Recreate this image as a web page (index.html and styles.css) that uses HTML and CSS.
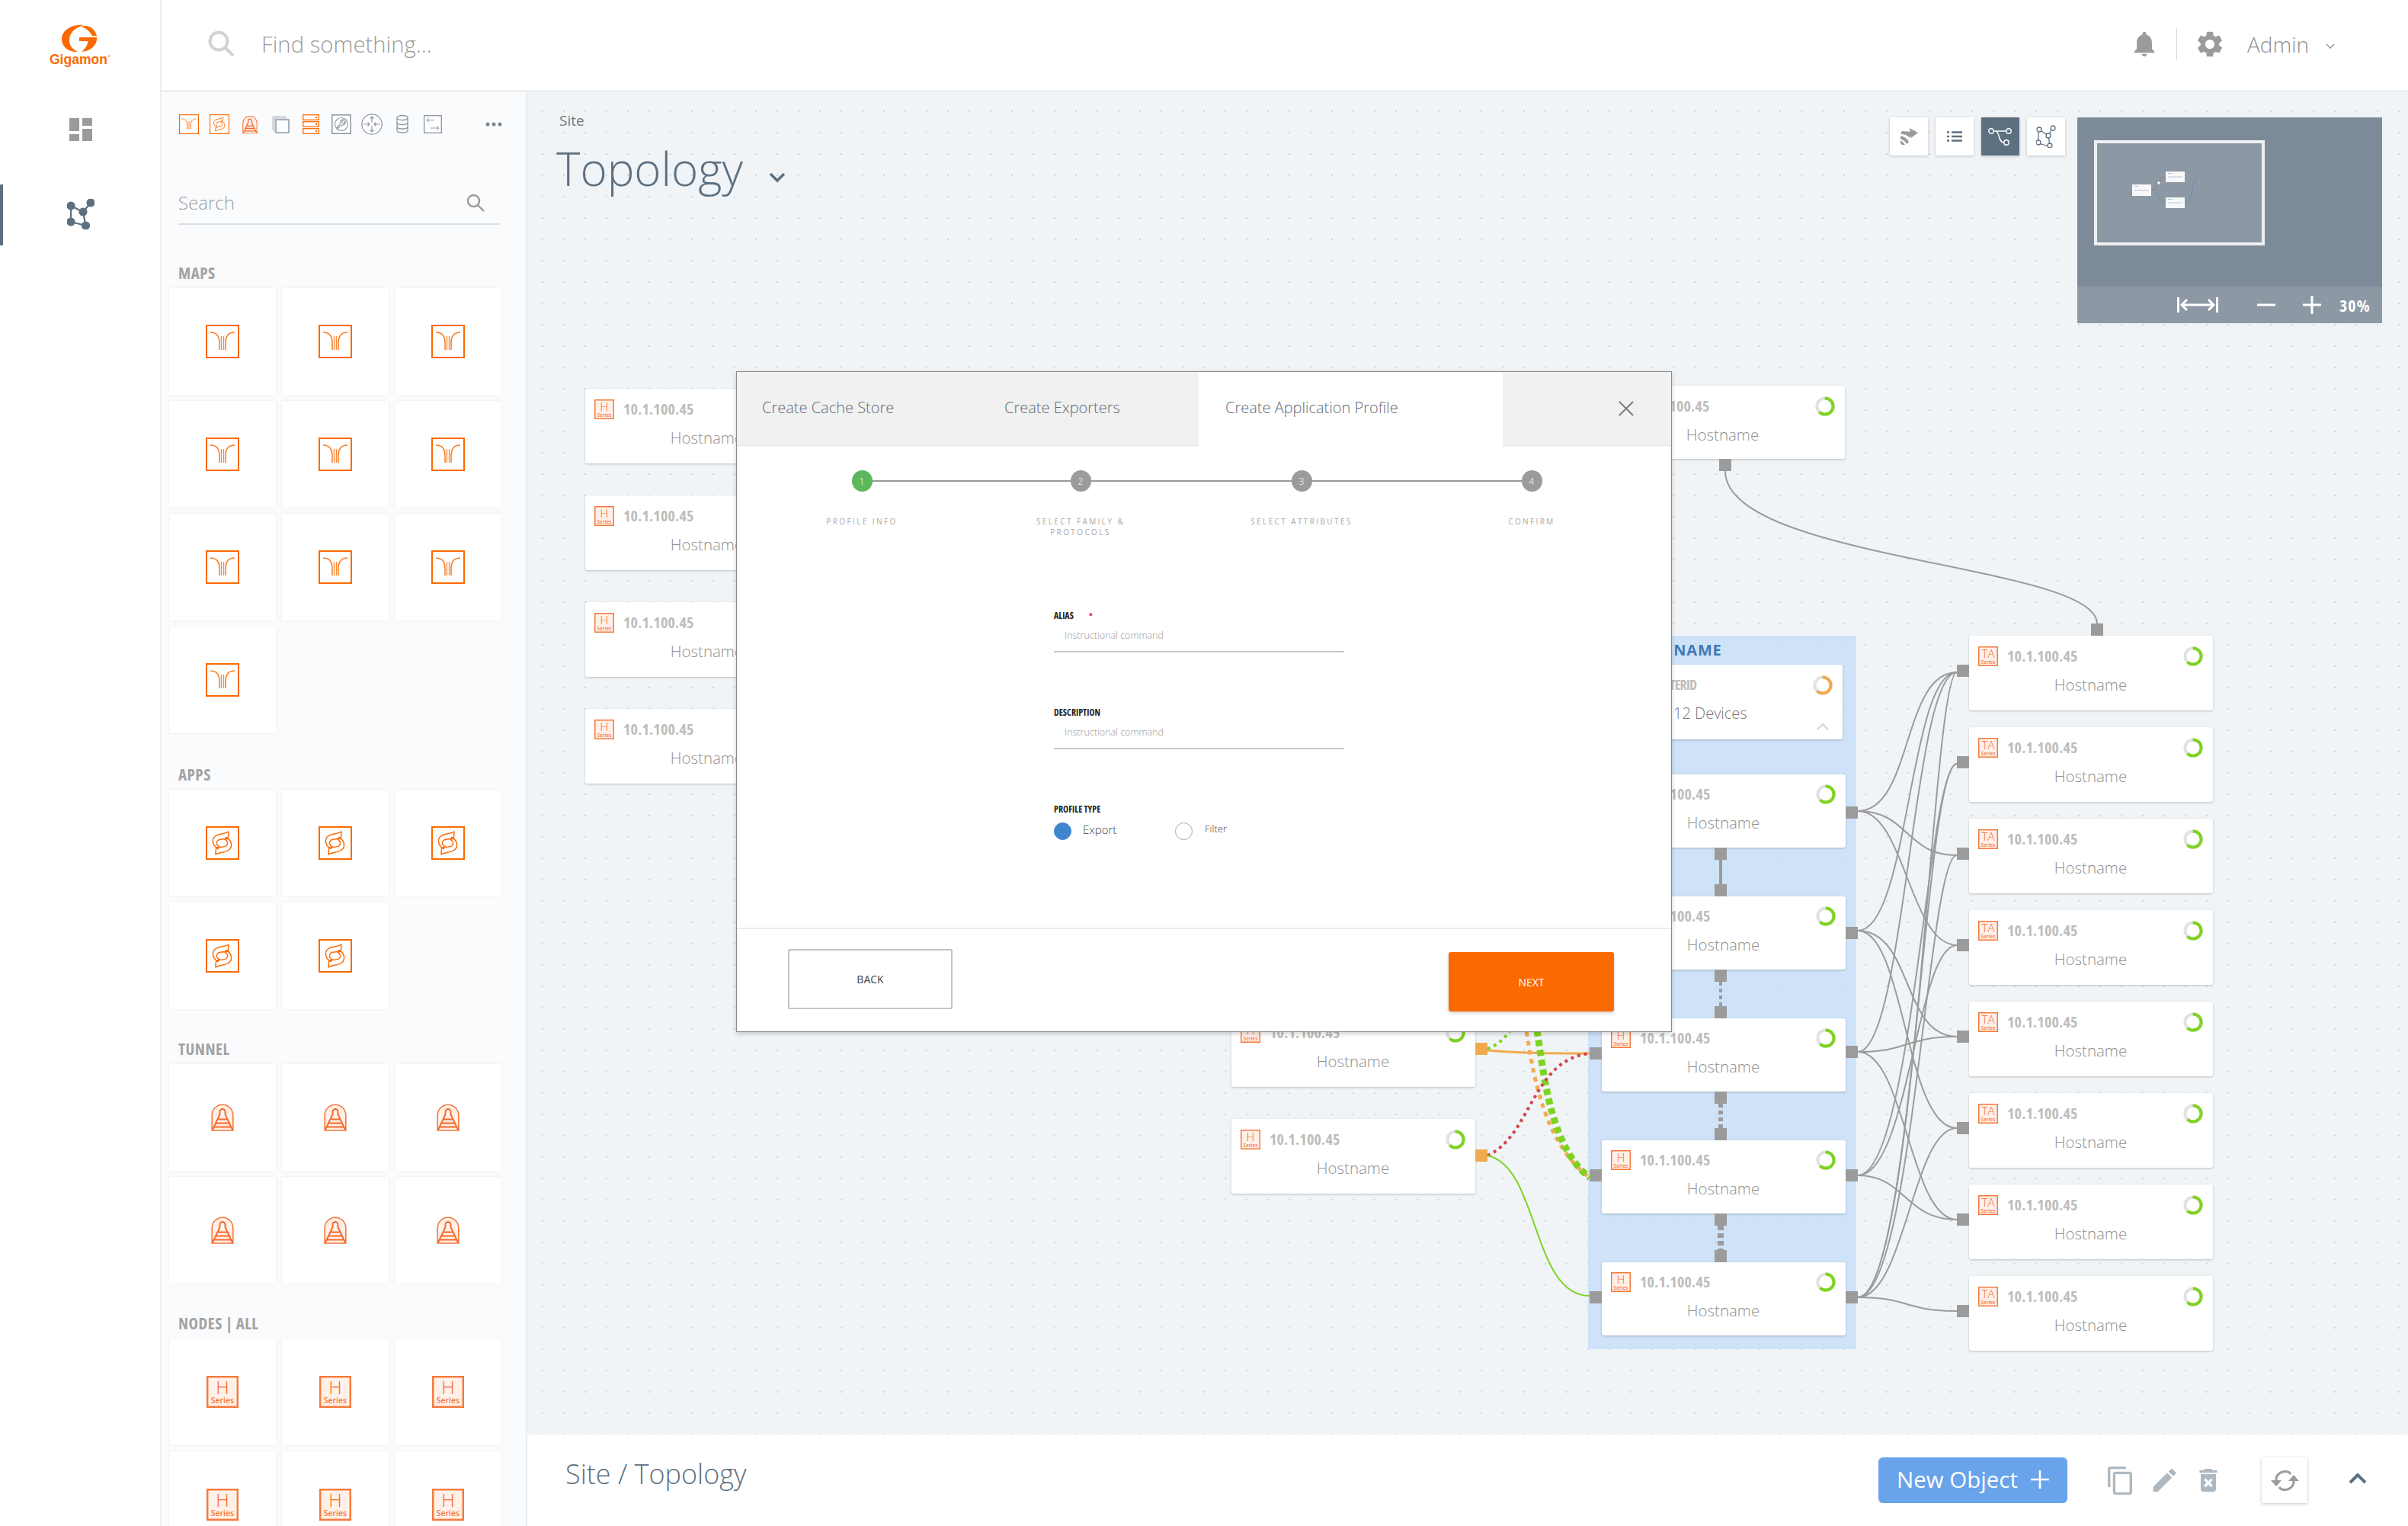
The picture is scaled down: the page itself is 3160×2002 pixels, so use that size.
FILE: index.html
```html
<!DOCTYPE html>
<html lang="en">
<head>
<meta charset="utf-8">
<title>Topology</title>
<link rel="stylesheet" href="styles.css">
</head>
<body>
<svg class="defs" width="0" height="0">
  <symbol id="i-map" viewBox="0 0 44 44"><rect x="1" y="1" width="42" height="42" fill="#fff" stroke="#fb6a00" stroke-width="2"/><path d="M6 10C13 10 18 14 18 24V33M38 10C31 10 26 14 26 24V33" fill="none" stroke="#fb7a1e" stroke-width="1.500"/><path d="M20.500 33V15M23.500 33V15" fill="none" stroke="#fb8a3c" stroke-width="1.300"/></symbol>
  <symbol id="i-app" viewBox="0 0 44 44"><rect x="1" y="1" width="42" height="42" fill="#fff" stroke="#fb6a00" stroke-width="2"/><g fill="none" stroke="#fb6a00" stroke-width="1.500" stroke-linejoin="round"><path d="M30 7C26 10 17 9.500 12.500 13C7.500 17 8.500 25 16 29.500L18 27C14 24.500 13 21 16 18.500C20 15.500 27 18 29 15.500C30 13 30 10 30 7Z"/><path d="M13 37C17 34 26 34.500 30.500 31C35.500 27 34.500 19 27 14.500L25 17C29 19.500 30 23 27 25.500C23 28.500 16 26 14 28.500C13 31 13 34 13 37Z"/></g></symbol>
  <symbol id="i-tun" viewBox="0 0 30 36"><path d="M1.200 35V15A13.800 13.800 0 0 1 28.800 15V35Z" fill="#fff0e8" stroke="#f5793a" stroke-width="1.600"/><path d="M1.500 35L11.500 14V10.500A3.500 3.500 0 0 1 18.500 10.500V14L28.500 35M8.500 20.500H21.500M6 25.500H24M3.500 30.500H26.500" fill="none" stroke="#f5682a" stroke-width="1.900"/></symbol>
  <symbol id="i-h" viewBox="0 0 26 26"><rect x=".75" y=".75" width="24.500" height="24.500" fill="#fff0e8" stroke="#f5793a" stroke-width="1.500"/><text x="13" y="15" class="ic-big" text-anchor="middle">H</text><text x="13" y="22.500" class="ic-small" text-anchor="middle">Series</text></symbol>
  <symbol id="i-ta" viewBox="0 0 26 26"><rect x=".75" y=".75" width="24.500" height="24.500" fill="#fff0e8" stroke="#f5793a" stroke-width="1.500"/><text x="13" y="15" class="ic-big" text-anchor="middle">TA</text><text x="13" y="22.500" class="ic-small" text-anchor="middle">Series</text></symbol>
  <symbol id="ring-g" viewBox="0 0 26 26"><circle cx="13" cy="13" r="10.600" fill="none" stroke="#e2e2e2" stroke-width="4"/><circle cx="13" cy="13" r="10.600" fill="none" stroke="#7ed321" stroke-width="4" pathLength="100" stroke-dasharray="63 100" transform="rotate(-92 13 13)"/></symbol>
  <symbol id="ring-o" viewBox="0 0 26 26"><circle cx="13" cy="13" r="10.600" fill="none" stroke="#e2e2e2" stroke-width="4"/><circle cx="13" cy="13" r="10.600" fill="none" stroke="#efab4e" stroke-width="4" pathLength="100" stroke-dasharray="63 100" transform="rotate(-92 13 13)"/></symbol>
</svg>

<div class="app">
  <nav class="nav">
    <svg class="logo" viewBox="64 30 86 58" width="86" height="58">
      <path d="M111 33C95 31 82 40 82 51C82 62 92 69 103 68C94 64 90 56 93 47C96 39 104 35 111 33Z" fill="#fb6a00"/>
      <path d="M107 35C116 32 125 36 128 47L122 47C119 41 114 37 107 35ZM105 49H128.500C128 60 120 67 108 68C114 63 116 58 116.500 54H105Z" fill="#fb6a00"/>
      <text x="66" y="84" class="logo-text">Gigamon</text>
      <circle cx="144.500" cy="73.500" r="1.300" fill="none" stroke="#fb8a3c" stroke-width=".7"/>
    </svg>
    <svg class="nav-dash" viewBox="0 0 30 30" width="30" height="30"><path d="M0 0H13V17H0ZM17 0H30V10H17ZM17 14H30V30H17ZM0 21H13V30H0Z" fill="#9b9b9b"/></svg>
    <div class="nav-item">
      <svg viewBox="0 0 36 40" width="36" height="40"><g stroke="#5d7080" stroke-width="2.200" fill="#5d7080"><path d="M5 9L21 17M31 5L21 17M5 9V30M5 30L24.500 35M21 17L24.500 35" fill="none"/><circle cx="5" cy="9" r="4.500"/><circle cx="31" cy="5" r="4.500"/><circle cx="21" cy="17" r="4.500"/><circle cx="5" cy="30" r="4.500"/><circle cx="24.500" cy="35" r="4.500"/></g></svg>
    </div>
  </nav>
  <div class="main">
    <header class="topbar">
      <svg class="top-search" viewBox="0 0 35 35" width="35" height="35"><circle cx="14" cy="14" r="11.500" fill="none" stroke="#d2d2d2" stroke-width="4"/><path d="M22 22L33 33" stroke="#d2d2d2" stroke-width="4"/></svg>
      <span class="find">Find something...</span>
      <svg class="bell" viewBox="4 2 16 20.500" width="28" height="34"><path fill="#9b9b9b" d="M12 22c1.100 0 2-.9 2-2h-4c0 1.100.89 2 2 2zm6-6v-5c0-3.070-1.640-5.640-4.500-6.320V4c0-.83-.67-1.500-1.500-1.500s-1.500.67-1.500 1.500v.68C7.630 5.360 6 7.920 6 11v5l-2 2v1h16v-1l-2-2z"/></svg>
      <span class="top-div"></span>
      <svg class="gear" viewBox="2.500 2 19 20" width="34" height="34"><path fill="#9b9b9b" d="M19.140 12.940c.04-.3.06-.61.06-.94 0-.32-.02-.64-.07-.94l2.030-1.580c.18-.14.23-.41.12-.61l-1.920-3.320c-.12-.22-.37-.29-.59-.22l-2.390.96c-.5-.38-1.030-.7-1.620-.94l-.36-2.540c-.04-.24-.24-.41-.48-.41h-3.840c-.24 0-.43.17-.47.41l-.36 2.540c-.59.24-1.130.57-1.620.94l-2.390-.96c-.22-.08-.47 0-.59.22L2.740 8.870c-.12.21-.08.47.12.61l2.030 1.580c-.05.3-.09.63-.09.94s.02.64.07.94l-2.030 1.580c-.18.14-.23.41-.12.61l1.920 3.320c.12.22.37.29.59.22l2.390-.96c.5.38 1.030.7 1.620.94l.36 2.540c.05.24.24.41.48.41h3.840c.24 0 .44-.17.47-.41l.36-2.540c.59-.24 1.130-.56 1.620-.94l2.390.96c.22.08.47 0 .59-.22l1.920-3.320c.12-.22.07-.47-.12-.61l-2.010-1.580zM12 15.600c-1.980 0-3.600-1.620-3.600-3.600s1.620-3.600 3.600-3.600 3.600 1.620 3.600 3.600-1.620 3.600-3.600 3.600z"/></svg>
      <span class="admin">Admin</span>
      <svg class="admin-chev" viewBox="0 0 12 7" width="12" height="7"><path d="M1 1L6 6L11 1" fill="none" stroke="#9b9b9b" stroke-width="1.500"/></svg>
    </header>
    <div class="work">
      <aside class="side">
        <div class="side-tabs">
          <svg class="t26" viewBox="0 0 44 44"><use href="#i-map"/></svg>
          <svg class="t26" viewBox="0 0 44 44"><use href="#i-app"/></svg>
          <svg class="t-tun" viewBox="0 0 30 36"><use href="#i-tun"/></svg>
          <svg class="t22" viewBox="0 0 23 23"><path d="M1 19V1H18M3 21V3H20" fill="none" stroke="#aeb4bb" stroke-width="1"/><rect x="5" y="5" width="17" height="17" fill="#fbfcfd" stroke="#8d96a1" stroke-width="1.500"/></svg>
          <svg class="t-srv" viewBox="0 0 22 26"><g fill="#fff" stroke="#fb6a00" stroke-width="1.300"><rect x=".7" y=".7" width="20.600" height="6.600"/><rect x=".7" y="9.700" width="20.600" height="6.600"/><rect x=".7" y="18.700" width="20.600" height="6.600"/></g><g fill="#fb7a1e"><circle cx="18" cy="4" r="1.300"/><circle cx="18" cy="13" r="1.300"/><circle cx="18" cy="22" r="1.300"/></g></svg>
          <svg class="t26" viewBox="0 0 26 26"><rect x=".8" y=".8" width="24.400" height="24.400" fill="#fff" stroke="#8d96a1" stroke-width="1.500"/><circle cx="13" cy="13" r="8.500" fill="none" stroke="#8d96a1" stroke-width="1.100"/><path d="M18 8.500a4 4 0 0 1-5 5.500l-4.500 4.500-1.500-1.500 4.500-4.500a4 4 0 0 1 4.500-5.500l-2.500 2.500.8 2 2 .6z" fill="none" stroke="#8d96a1" stroke-width="1.100"/></svg>
          <svg class="t28" viewBox="0 0 28 28"><circle cx="14" cy="14" r="13.200" fill="#fff" stroke="#8d96a1" stroke-width="1.200"/><path d="M14 11.500V4M11.500 6.500L14 4L16.500 6.500M14 16.500V24M11.500 21.500L14 24L16.500 21.500M3 14H11M8.500 11.500L11 14L8.500 16.500M25 14H17M19.500 11.500L17 14L19.500 16.500" fill="none" stroke="#8d96a1" stroke-width="1.200"/></svg>
          <svg class="t-db" viewBox="0 0 16 26"><path d="M1 4.500V21C1 25 15 25 15 21V4.500M1 4.500C1 .5 15 .5 15 4.500C15 8.500 1 8.500 1 4.500ZM1 10.500C1 14.500 15 14.500 15 10.500M1 16C1 20 15 20 15 16" fill="none" stroke="#8d96a1" stroke-width="1.300"/></svg>
          <svg class="t-arr" viewBox="0 0 24 24"><rect x=".7" y=".7" width="22.600" height="22.600" fill="#fff" stroke="#8d96a1" stroke-width="1.300"/><path d="M14 6.500H4M7 3.500L4 6.500L7 9.500M9 17H20M17 14L20 17L17 20" fill="none" stroke="#8d96a1" stroke-width="1"/></svg>
          <svg class="t-dots" viewBox="0 0 22 6"><g fill="#7c8693"><circle cx="3" cy="3" r="2.500"/><circle cx="11" cy="3" r="2.500"/><circle cx="19" cy="3" r="2.500"/></g></svg>
        </div>
        <div class="side-search">
          <span>Search</span>
          <svg viewBox="0 0 24 24" width="24" height="24"><circle cx="9.500" cy="9.500" r="7.500" fill="none" stroke="#9b9b9b" stroke-width="2.400"/><path d="M15 15L23 23" stroke="#9b9b9b" stroke-width="2.400"/></svg>
        </div>
        <h4 class="side-label">MAPS</h4>
        <div class="cards">
          <div class="card"><svg class="ic44"><use href="#i-map"/></svg></div>
          <div class="card"><svg class="ic44"><use href="#i-map"/></svg></div>
          <div class="card"><svg class="ic44"><use href="#i-map"/></svg></div>
          <div class="card"><svg class="ic44"><use href="#i-map"/></svg></div>
          <div class="card"><svg class="ic44"><use href="#i-map"/></svg></div>
          <div class="card"><svg class="ic44"><use href="#i-map"/></svg></div>
          <div class="card"><svg class="ic44"><use href="#i-map"/></svg></div>
          <div class="card"><svg class="ic44"><use href="#i-map"/></svg></div>
          <div class="card"><svg class="ic44"><use href="#i-map"/></svg></div>
          <div class="card"><svg class="ic44"><use href="#i-map"/></svg></div>
        </div>
        <h4 class="side-label label-apps">APPS</h4>
        <div class="cards">
          <div class="card"><svg class="ic44"><use href="#i-app"/></svg></div>
          <div class="card"><svg class="ic44"><use href="#i-app"/></svg></div>
          <div class="card"><svg class="ic44"><use href="#i-app"/></svg></div>
          <div class="card"><svg class="ic44"><use href="#i-app"/></svg></div>
          <div class="card"><svg class="ic44"><use href="#i-app"/></svg></div>
        </div>
        <h4 class="side-label">TUNNEL</h4>
        <div class="cards">
          <div class="card"><svg class="ic-tun"><use href="#i-tun"/></svg></div>
          <div class="card"><svg class="ic-tun"><use href="#i-tun"/></svg></div>
          <div class="card"><svg class="ic-tun"><use href="#i-tun"/></svg></div>
          <div class="card"><svg class="ic-tun"><use href="#i-tun"/></svg></div>
          <div class="card"><svg class="ic-tun"><use href="#i-tun"/></svg></div>
          <div class="card"><svg class="ic-tun"><use href="#i-tun"/></svg></div>
        </div>
        <h4 class="side-label">NODES | ALL</h4>
        <div class="cards">
          <div class="card"><svg class="ic42"><use href="#i-h"/></svg></div>
          <div class="card"><svg class="ic42"><use href="#i-h"/></svg></div>
          <div class="card"><svg class="ic42"><use href="#i-h"/></svg></div>
          <div class="card"><svg class="ic42"><use href="#i-h"/></svg></div>
          <div class="card"><svg class="ic42"><use href="#i-h"/></svg></div>
          <div class="card"><svg class="ic42"><use href="#i-h"/></svg></div>
        </div>
      </aside>
      <div class="stage">
        <section class="canvas">
          <div class="crumb">Site</div>
          <div class="title-row">
            <h1>Topology</h1>
            <svg viewBox="0 0 22 14" width="22" height="14"><path d="M2 2L11 11L20 2" fill="none" stroke="#5d7080" stroke-width="3.500"/></svg>
          </div>

          <div class="tools">
            <button class="tool"><svg viewBox="0 0 23 22" width="23" height="22"><path d="M12 0L23 6L14 13Z" fill="#9b9b9b"/><path d="M15 5L2 4L0 8C6 8 10 10 12 13L15 9ZM0 10.500C5 11 9 14 11 18L8 21C6 17 3 15 0 14.500ZM0 16.500C2 17 4 19 6 22L2 22L0 20Z" fill="#9b9b9b"/></svg></button>
            <button class="tool"><svg viewBox="0 0 20 14" width="20" height="14"><path d="M6 1.500H20M6 7H20M6 12.500H20M0 1.500H3M0 7H3M0 12.500H3" stroke="#5d7080" stroke-width="2.600"/></svg></button>
            <button class="tool tool-on"><svg viewBox="0 0 32 24" width="32" height="24"><g fill="none" stroke="#fff" stroke-width="1.400"><circle cx="4" cy="5" r="3.200"/><circle cx="27" cy="5" r="3.200"/><circle cx="24" cy="20" r="3.200"/><path d="M7.200 5H23.800M10 5C15 5 13 20 20.800 20"/></g></svg></button>
            <button class="tool"><svg viewBox="0 0 26 30" width="26" height="30"><g fill="#fff" stroke="#5d7080" stroke-width="1.300"><path d="M4 6L16 14M22 3L16 14M3 7V23M3 24L17 28M16 14L18 27" fill="none"/><circle cx="4" cy="6" r="3"/><circle cx="22" cy="4" r="3"/><circle cx="16" cy="14" r="3"/><circle cx="3" cy="23" r="3"/><circle cx="18" cy="27" r="3"/></g></svg></button>
            <div class="minimap">
              <div class="mini-view">
                <svg viewBox="2752 188 216 130" width="216" height="130"><path d="M2823 249C2835 249 2830 232 2842 232" fill="none" stroke="#a87a6a" stroke-width="1"/><path d="M2823 249C2835 249 2830 266 2842 266M2867 266C2880 266 2875 232 2884 232" fill="none" stroke="#6a8eb0" stroke-width="1"/><circle cx="2833" cy="240" r="2.200" fill="#fff" stroke="#a87a6a" stroke-width=".7"/><g fill="#f7f8f9"><rect x="2798" y="242" width="25" height="15"/><rect x="2842" y="225" width="25" height="14"/><rect x="2842" y="259" width="25" height="14"/></g><path d="M2801 244.500H2806M2801 249.500H2820M2845 227.500H2851M2845 232H2864M2845 261.500H2851M2845 266H2864" stroke="#b7c6d3" stroke-width="1"/></svg>
              </div>
              <div class="mini-foot">
                <svg class="fit" viewBox="0 0 54 20" width="54" height="20"><path d="M1.500 0V20M52.500 0V20M6 10H48M13 3L6 10L13 17M41 3L48 10L41 17" fill="none" stroke="#fff" stroke-width="3"/></svg>
                <svg class="m-minus" viewBox="0 0 24 4" width="24" height="4"><path d="M0 2H24" stroke="#fff" stroke-width="3"/></svg>
                <svg class="m-plus" viewBox="0 0 24 24" width="24" height="24"><path d="M0 12H24M12 0V24" stroke="#fff" stroke-width="3"/></svg>
                <span>30%</span>
              </div>
            </div>
          </div>

          <div class="col col-left">
            <div class="node"><div class="nh"><svg class="badge"><use href="#i-h"/></svg><span class="ip">10.1.100.45</span><svg class="ring"><use href="#ring-g"/></svg></div><div class="host">Hostname</div></div>
            <div class="node"><div class="nh"><svg class="badge"><use href="#i-h"/></svg><span class="ip">10.1.100.45</span><svg class="ring"><use href="#ring-g"/></svg></div><div class="host">Hostname</div></div>
            <div class="node"><div class="nh"><svg class="badge"><use href="#i-h"/></svg><span class="ip">10.1.100.45</span><svg class="ring"><use href="#ring-g"/></svg></div><div class="host">Hostname</div></div>
            <div class="node"><div class="nh"><svg class="badge"><use href="#i-h"/></svg><span class="ip">10.1.100.45</span><svg class="ring"><use href="#ring-g"/></svg></div><div class="host">Hostname</div></div>
          </div>

          <div class="col col-low">
            <div class="node"><div class="nh"><svg class="badge"><use href="#i-h"/></svg><span class="ip">10.1.100.45</span><svg class="ring"><use href="#ring-g"/></svg></div><div class="host">Hostname</div><i class="port pr orange"></i></div>
            <div class="node"><div class="nh"><svg class="badge"><use href="#i-h"/></svg><span class="ip">10.1.100.45</span><svg class="ring"><use href="#ring-g"/></svg></div><div class="host">Hostname</div><i class="port pr orange"></i></div>
          </div>

          <div class="node node-top"><div class="nh"><svg class="badge"><use href="#i-h"/></svg><span class="ip">10.1.100.45</span><svg class="ring"><use href="#ring-g"/></svg></div><div class="host">Hostname</div><i class="port pb pb-tail"></i></div>

          <div class="group">
            <div class="group-title">GROUP NAME</div>
            <div class="node cluster">
              <div class="nh"><svg class="badge"><use href="#i-h"/></svg><span class="ip">CLUSTERID</span><svg class="ring"><use href="#ring-o"/></svg></div>
              <div class="devices">12 Devices</div>
              <svg class="cl-chev" viewBox="0 0 16 10" width="16" height="10"><path d="M1 9L8 2L15 9" fill="none" stroke="#d5d5d5" stroke-width="2.200"/></svg>
            </div>
            <div class="node gnode"><div class="nh"><svg class="badge"><use href="#i-h"/></svg><span class="ip">10.1.100.45</span><svg class="ring"><use href="#ring-g"/></svg></div><div class="host">Hostname</div><i class="port pr p42"></i><i class="port pb"></i></div>
            <div class="node gnode"><div class="nh"><svg class="badge"><use href="#i-h"/></svg><span class="ip">10.1.100.45</span><svg class="ring"><use href="#ring-g"/></svg></div><div class="host">Hostname</div><i class="port pr p40"></i><i class="port pt"></i><i class="port pb"></i></div>
            <div class="node gnode"><div class="nh"><svg class="badge"><use href="#i-h"/></svg><span class="ip">10.1.100.45</span><svg class="ring"><use href="#ring-g"/></svg></div><div class="host">Hostname</div><i class="port pl"></i><i class="port pr p36"></i><i class="port pt"></i><i class="port pb"></i></div>
            <div class="node gnode"><div class="nh"><svg class="badge"><use href="#i-h"/></svg><span class="ip">10.1.100.45</span><svg class="ring"><use href="#ring-g"/></svg></div><div class="host">Hostname</div><i class="port pl"></i><i class="port pr"></i><i class="port pt"></i><i class="port pb"></i></div>
            <div class="node gnode"><div class="nh"><svg class="badge"><use href="#i-h"/></svg><span class="ip">10.1.100.45</span><svg class="ring"><use href="#ring-g"/></svg></div><div class="host">Hostname</div><i class="port pl"></i><i class="port pr"></i><i class="port pt"></i></div>
          </div>

          <div class="col col-ta">
            <div class="node"><div class="nh"><svg class="badge"><use href="#i-ta"/></svg><span class="ip">10.1.100.45</span><svg class="ring"><use href="#ring-g"/></svg></div><div class="host">Hostname</div><i class="port pl"></i><i class="port pb-top"></i></div>
            <div class="node"><div class="nh"><svg class="badge"><use href="#i-ta"/></svg><span class="ip">10.1.100.45</span><svg class="ring"><use href="#ring-g"/></svg></div><div class="host">Hostname</div><i class="port pl"></i></div>
            <div class="node"><div class="nh"><svg class="badge"><use href="#i-ta"/></svg><span class="ip">10.1.100.45</span><svg class="ring"><use href="#ring-g"/></svg></div><div class="host">Hostname</div><i class="port pl"></i></div>
            <div class="node"><div class="nh"><svg class="badge"><use href="#i-ta"/></svg><span class="ip">10.1.100.45</span><svg class="ring"><use href="#ring-g"/></svg></div><div class="host">Hostname</div><i class="port pl"></i></div>
            <div class="node"><div class="nh"><svg class="badge"><use href="#i-ta"/></svg><span class="ip">10.1.100.45</span><svg class="ring"><use href="#ring-g"/></svg></div><div class="host">Hostname</div><i class="port pl"></i></div>
            <div class="node"><div class="nh"><svg class="badge"><use href="#i-ta"/></svg><span class="ip">10.1.100.45</span><svg class="ring"><use href="#ring-g"/></svg></div><div class="host">Hostname</div><i class="port pl"></i></div>
            <div class="node"><div class="nh"><svg class="badge"><use href="#i-ta"/></svg><span class="ip">10.1.100.45</span><svg class="ring"><use href="#ring-g"/></svg></div><div class="host">Hostname</div><i class="port pl"></i></div>
            <div class="node"><div class="nh"><svg class="badge"><use href="#i-ta"/></svg><span class="ip">10.1.100.45</span><svg class="ring"><use href="#ring-g"/></svg></div><div class="host">Hostname</div><i class="port pl"></i></div>
          </div>

          <svg class="links" viewBox="692 121 2468 1761" width="2468" height="1761">
            <g fill="none" stroke="#9b9b9b" stroke-width="2">
              <path d="M2264 618C2264 735 2752 740 2752 818"/>
              <path d="M2438 1064C2510 1064 2496 882 2568 882"/>
              <path d="M2438 1064C2505 1064 2500 1122 2568 1122"/>
              <path d="M2438 1064C2500 1064 2506 1240 2568 1240"/>
              <path d="M2438 1221C2505 1221 2505 882 2568 882"/>
              <path d="M2438 1221C2510 1221 2496 1360 2568 1360"/>
              <path d="M2438 1221C2500 1221 2500 1480 2568 1480"/>
              <path d="M2438 1380C2500 1380 2510 882 2568 882"/>
              <path d="M2438 1380C2505 1380 2500 1360 2568 1360"/>
              <path d="M2438 1380C2500 1380 2506 1600 2568 1600"/>
              <path d="M2438 1542C2510 1542 2530 1002 2568 1002"/>
              <path d="M2438 1542C2505 1542 2515 1240 2568 1240"/>
              <path d="M2438 1542C2500 1542 2500 1600 2568 1600"/>
              <path d="M2438 1702C2515 1702 2535 882 2568 882"/>
              <path d="M2438 1702C2510 1702 2525 1002 2568 1002"/>
              <path d="M2438 1702C2510 1702 2530 1122 2568 1122"/>
              <path d="M2438 1702C2500 1702 2510 1480 2568 1480"/>
              <path d="M2438 1702C2505 1702 2500 1720 2568 1720"/>
            </g>
            <path d="M2258 1128V1160" stroke="#9b9b9b" stroke-width="4"/>
            <path d="M2258 1288V1320" stroke="#9b9b9b" stroke-width="4" stroke-dasharray="5 4"/>
            <path d="M2258 1448V1480" stroke="#9b9b9b" stroke-width="6" stroke-dasharray="5 4"/>
            <path d="M2258 1608V1640" stroke="#9b9b9b" stroke-width="8" stroke-dasharray="6 4"/>
            <g fill="none">
              <path d="M1952 1378C2000 1382 2040 1382 2086 1382" stroke="#efab4e" stroke-width="3"/>
              <path d="M1952 1376C1975 1368 1988 1345 2000 1320" stroke="#7ed321" stroke-width="4" stroke-dasharray="4 5"/>
              <path d="M2000 1330C2012 1420 2028 1500 2086 1545" stroke="#efab4e" stroke-width="5" stroke-dasharray="6 6"/>
              <path d="M2010 1300C2025 1400 2030 1500 2086 1545" stroke="#7ed321" stroke-width="9" stroke-dasharray="8 5"/>
              <path d="M1952 1516C2010 1490 2010 1390 2086 1382" stroke="#d0454c" stroke-width="4" stroke-dasharray="4 5"/>
              <path d="M1952 1516C2020 1530 2010 1700 2086 1700" stroke="#7ed321" stroke-width="2"/>
            </g>
          </svg>

          <div class="modal">
            <div class="m-tabs">
              <div class="m-tab mt1">Create Cache Store</div>
              <div class="m-tab mt2">Create Exporters</div>
              <div class="m-tab mt3">Create Application Profile</div>
              <svg class="m-close" viewBox="0 0 20 20" width="20" height="20"><path d="M1 1L19 19M19 1L1 19" stroke="#777" stroke-width="1.800"/></svg>
            </div>
            <div class="steps">
              <div class="step"><b class="dot dot-on">1</b><span>PROFILE INFO</span></div>
              <div class="step"><b class="dot">2</b><span>SELECT FAMILY &amp; PROTOCOLS</span></div>
              <div class="step"><b class="dot">3</b><span>SELECT ATTRIBUTES</span></div>
              <div class="step"><b class="dot">4</b><span>CONFIRM</span></div>
            </div>
            <div class="form">
              <div class="field">
                <label>ALIAS<em>*</em></label>
                <div class="ph">Instructional command</div>
              </div>
              <div class="field">
                <label>DESCRIPTION</label>
                <div class="ph">Instructional command</div>
              </div>
              <div class="field-radio">
                <label>PROFILE TYPE</label>
                <div class="radios">
                  <i class="radio radio-on"></i><span class="r-export">Export</span>
                  <i class="radio"></i><span class="r-filter">Filter</span>
                </div>
              </div>
            </div>
            <div class="m-foot">
              <button class="btn-back">BACK</button>
              <button class="btn-next">NEXT</button>
            </div>
          </div>
        </section>
        <footer class="bottom">
          <span class="path">Site / Topology</span>
          <button class="new-obj">New Object<svg viewBox="0 0 24 24" width="24" height="24"><path d="M0 12H24M12 0V24" stroke="#fff" stroke-width="2.600"/></svg></button>
          <svg class="b-copy" viewBox="2 1 19 22" width="32" height="37"><path fill="#aeb8c1" d="M16 1H4c-1.100 0-2 .9-2 2v14h2V3h12V1zm3 4H8c-1.100 0-2 .9-2 2v14c0 1.100.9 2 2 2h11c1.100 0 2-.9 2-2V7c0-1.100-.9-2-2-2zm0 16H8V7h11v14z"/></svg>
          <svg class="b-edit" viewBox="3 3 18 18" width="31" height="30"><path fill="#aeb8c1" d="M3 17.250V21h3.750L17.810 9.940l-3.750-3.750L3 17.250zM20.710 7.040c.39-.39.39-1.020 0-1.410l-2.340-2.340c-.39-.39-1.020-.39-1.410 0l-1.830 1.830 3.750 3.750 1.830-1.830z"/></svg>
          <svg class="b-trash" viewBox="5 3 14 18" width="24" height="30"><path fill="#aeb8c1" d="M6 19c0 1.100.9 2 2 2h8c1.100 0 2-.9 2-2V7H6v12zm2.460-7.120l1.410-1.410L12 12.590l2.120-2.120 1.410 1.410L13.410 14l2.120 2.120-1.410 1.410L12 15.410l-2.120 2.120-1.410-1.410L10.590 14l-2.130-2.120zM15.500 4l-1-1h-5l-1 1H5v2h14V4z"/></svg>
          <div class="b-sync"><svg viewBox="0 0 37 27" width="37" height="27"><path d="M7 15V12C7 5 14 1 20 1.500C23 1.800 25 3 26 5M30 12V15C30 22 23 26 17 25.500C14 25.200 12 24 11 22" fill="none" stroke="#9b9b9b" stroke-width="3"/><path d="M0 13H14L7 21ZM23 14H37L30 6Z" fill="#9b9b9b"/></svg></div>
          <svg class="b-up" viewBox="0 0 24 15" width="24" height="15"><path d="M2 13L12 3L22 13" fill="none" stroke="#5d7080" stroke-width="4"/></svg>
        </footer>
      </div>
    </div>
  </div>
</div>
</body>
</html>
```
FILE: styles.css
```css
* { box-sizing: border-box; }
html, body { margin: 0; padding: 0; }
body { width: 3160px; height: 2002px; overflow: hidden; font-family: "Open Sans", "Liberation Sans", sans-serif; background: #fff; }
.defs { position: absolute; }
svg { display: block; flex: none; }
button { font-family: inherit; cursor: pointer; }
h1, h4 { margin: 0; font-weight: inherit; }

.ic-big { font: 300 15px "Open Sans", sans-serif; fill: #f5682a; }
.ic-small { font: 600 6.500px "Open Sans", sans-serif; fill: #f5793a; }
.logo-text { font: 700 17.500px "Liberation Sans", sans-serif; fill: #fb6a00; }

.app { display: flex; width: 3160px; height: 2002px; }

.nav { width: 212px; flex: none; border-right: 2px solid #eceef0; display: flex; flex-direction: column; align-items: center; padding-top: 30px; padding-right: 2px; }
.logo { margin-left: 4px; }
.nav-dash { margin-top: 67px; margin-left: 4px; }
.nav-item { width: 100%; height: 80px; margin-top: 57px; border-left: 4px solid #5d7080; display: flex; align-items: center; justify-content: center; padding-bottom: 3px; }

.main { flex: 1; display: flex; flex-direction: column; min-width: 0; }
.topbar { height: 121px; flex: none; border-bottom: 3px solid #eceef0; display: flex; align-items: center; padding-bottom: 3px; padding-left: 61px; }
.find { margin-left: 35px; font-size: 29.300px; font-weight: 300; color: #9b9b9b; }
.bell { margin-left: auto; }
.top-div { width: 1px; height: 42px; background: #d8d8d8; margin-left: 28px; }
.gear { margin-left: 26px; }
.admin { margin-left: 32px; font-size: 28px; font-weight: 300; color: #8f8f8f; }
.admin-chev { margin-left: 22px; margin-right: 96px; margin-top: 6px; }

.work { flex: 1; display: flex; min-height: 0; }

.side { width: 480px; flex: none; background: #fafbfd; border-right: 2px solid #e9ecf0; padding: 0 0 0 10px; overflow: hidden; height: 1881px; }
.side-tabs { display: grid; grid-template-columns: repeat(9, 40px) auto; align-items: center; justify-items: center; height: 30px; margin: 27px 0 0 6px; }
.t26 { width: 26px; height: 26px; }
.t-tun { width: 20px; height: 25px; }
.t22 { width: 23px; height: 23px; }
.t-srv { width: 22px; height: 26px; }
.t28 { width: 28px; height: 28px; }
.t-db { width: 16px; height: 26px; }
.t-arr { width: 24px; height: 24px; }
.t-dots { width: 22px; height: 6px; margin-left: 17px; }
.side-search { display: flex; align-items: center; justify-content: space-between; margin: 62px 34px 0 12px; height: 55px; border-bottom: 2px solid #dcdfe3; padding-right: 20px; padding-bottom: 2px; font-size: 24px; font-weight: 300; color: #9b9b9b; }
.side-label { font-size: 21px; font-weight: 700; font-stretch: 75%; color: #a3a3a3; height: 20px; line-height: 20px; margin: 42px 0 10px 12px; letter-spacing: .5px; }
.side-search + .side-label { margin-top: 53px; }
.label-apps { margin-top: 44px; }
.cards { display: grid; grid-template-columns: repeat(3, 140px); gap: 8px; }
.card { height: 140px; background: #fff; box-shadow: 0 0 3px rgba(0, 0, 0, .07); display: flex; align-items: center; justify-content: center; }
.ic44 { width: 44px; height: 44px; }
.ic-tun { width: 30px; height: 36px; }
.ic42 { width: 42px; height: 42px; }

.stage { flex: 1; display: flex; flex-direction: column; min-width: 0; }
.canvas { flex: 1; position: relative; overflow: hidden; background-color: #f0f4f7; background-image: radial-gradient(circle, #d0d6dc 1.200px, transparent 1.500px); background-size: 28px 28px; background-position: 6px 11px; padding: 24px 0 0 38px; color: #5d7080; }
.crumb { font-size: 19px; color: #6c7a87; padding-left: 4px; height: 26px; line-height: 26px; }
.title-row { display: flex; align-items: center; margin-top: 9px; }
.title-row h1 { font-size: 60px; font-weight: 300; line-height: 82px; color: #5d7080; }
.title-row svg { margin-left: 34px; margin-top: 24px; }

.tools { position: absolute; top: 33px; right: 34px; display: flex; gap: 10px; align-items: flex-start; }
.tool { width: 50px; height: 50px; border: 0; padding: 0; background: #fff; box-shadow: 0 1px 4px rgba(0, 0, 0, .2); display: flex; align-items: center; justify-content: center; }
.tool-on { background: #5d7080; }
.minimap { width: 400px; height: 270px; background: #7d8b99; margin-left: 6px; display: flex; flex-direction: column; justify-content: space-between; }
.mini-view { width: 224px; height: 138px; margin: 30px 0 0 22px; border: 4px solid #eef0f2; background: #8c98a4; }
.mini-foot { height: 48px; background: #8c98a4; display: flex; align-items: center; padding-left: 131px; color: #fff; font-size: 20px; font-weight: 700; }
.m-minus { margin-left: 51px; }
.m-plus { margin-left: 36px; }
.mini-foot span { margin-left: 24px; font-stretch: 75%; font-size: 22px; letter-spacing: 1px; }

.col { position: absolute; display: flex; flex-direction: column; }
.col-left { left: 76px; top: 389px; gap: 42px; }
.col-low { left: 924px; top: 1207px; gap: 42px; }
.col-ta { left: 1892px; top: 713px; gap: 22px; }

.node { position: relative; width: 320px; height: 98px; background: #fff; border-radius: 3px; box-shadow: 0 1px 3px rgba(0, 0, 0, .22); padding: 14px 13px 0 12px; }
.nh { display: flex; align-items: center; height: 26px; }
.badge { width: 26px; height: 26px; }
.ip { margin-left: 12px; margin-top: -2px; font-size: 20px; font-weight: 700; font-stretch: 75%; color: #bdbdbd; letter-spacing: .2px; }
.ring { width: 26px; height: 26px; margin-left: auto; }
.host { margin-top: 10px; text-align: center; font-size: 20.500px; line-height: 28px; font-weight: 300; color: #8f8f8f; }
.node-top { position: absolute; left: 1409px; top: 385px; height: 96px; }

.port { position: absolute; width: 16px; height: 16px; background: #9b9b9b; }
.pr { left: 100%; top: 38px; }
.pl { right: 100%; top: 38px; }
.pt { bottom: 100%; left: 148px; }
.pb { top: 100%; left: 148px; }
.pb-tail { left: 155px; }
.pb-top { bottom: 100%; left: 160px; }
.p42 { top: 42px; }
.p40 { top: 40px; }
.p36 { top: 36px; }
.orange { background: #efab4e; top: 40px; }

.group { position: absolute; left: 1392px; top: 713px; width: 352px; height: 936px; background: rgba(186, 216, 248, .62); }
.group-title { height: 38px; line-height: 38px; padding-left: 31px; font-size: 20px; font-weight: 700; letter-spacing: .8px; color: #4279b6; }
.cluster { margin-left: 14px; }
.cluster .ip { margin-left: 24px; font-size: 18px; letter-spacing: -.8px; }
.devices { margin-top: 10px; margin-left: 86px; font-size: 20px; line-height: 28px; font-weight: 300; color: #777; }
.cl-chev { position: absolute; right: 18px; bottom: 12px; }
.gnode { margin-left: 18px; height: 96px; padding-top: 13px; margin-top: 64px; }
.cluster + .gnode { margin-top: 46px; }
.links { position: absolute; left: 0; top: 0; pointer-events: none; }

.modal { position: absolute; left: 274px; top: 366px; width: 1228px; height: 867px; background: #fff; border: 1px solid #8a8a8a; box-shadow: 0 2px 6px rgba(0, 0, 0, .2); display: flex; flex-direction: column; color: #5d6b78; }
.m-tabs { position: relative; display: flex; height: 97px; flex: none; background: #f1f1f1; border-bottom: 1px solid #e6e6e6; }
.m-tab { font-size: 20px; font-weight: 300; line-height: 94px; }
.mt1 { width: 317px; padding-left: 33px; }
.mt2 { width: 289px; padding-left: 34px; }
.mt3 { width: 399px; padding-left: 35px; background: #fff; height: 97px; }
.m-close { margin: 38px 0 0 152px; }
.steps { position: relative; display: grid; grid-template-columns: 290px 284px 296px 308px; margin: 32px 0 0 19px; width: 1178px; }
.steps::before { content: ""; position: absolute; left: 145px; right: 154px; top: 13px; height: 2px; background: #9b9b9b; }
.step { position: relative; display: flex; flex-direction: column; align-items: center; }
.dot { width: 27px; height: 28px; border-radius: 50%; background: #9b9b9b; color: #fff; font-size: 12px; font-weight: 300; display: flex; align-items: center; justify-content: center; }
.dot-on { background: #5cb85c; }
.step span { margin-top: 32px; width: 160px; text-align: center; font-size: 10px; font-weight: 400; line-height: 14px; letter-spacing: 2.400px; color: #a8a8a8; }
.form { margin: 96px 0 0 416px; width: 381px; }
.form label { display: block; font-size: 12px; font-weight: 700; font-stretch: 75%; line-height: 14px; color: #222; }
.form em { font-style: normal; color: #e01e3c; margin-left: 20px; font-size: 11px; }
.field { height: 127px; }
.ph { border-bottom: 2px solid #c8c8c8; height: 41px; padding: 10px 0 0 14px; font-size: 12.500px; font-weight: 300; line-height: 18px; color: #999; }
.radios { display: flex; align-items: center; margin-top: 6px; height: 30px; }
.radio { width: 23px; height: 23px; border-radius: 50%; border: 1px solid #aaa; background: #fff; }
.radio-on { background: #3f86cf; border-color: #3f86cf; }
.r-export { margin: -4px 0 0 15px; width: 121px; font-size: 15px; font-weight: 300; color: #444; }
.r-filter { margin: -6px 0 0 16px; font-size: 13px; font-weight: 300; color: #444; }
.m-foot { position: absolute; left: 0; right: 0; bottom: 0; height: 136px; border-top: 2px solid #ececec; display: flex; justify-content: space-between; padding: 26px 75px 0 67px; align-items: flex-start; }
.btn-back { width: 216px; height: 79px; background: #fff; border: 2px solid #c4c4c4; border-radius: 2px; font-size: 14px; font-weight: 400; color: #444; padding: 0; }
.btn-next { width: 217px; height: 78px; margin-top: 4px; background: #fb6a00; border: 0; border-radius: 3px; font-size: 14px; font-weight: 400; color: #fff; box-shadow: 0 2px 4px rgba(0, 0, 0, .2); padding: 0; }

.bottom { height: 120px; flex: none; background: #fff; display: flex; align-items: center; padding-left: 50px; }
.path { font-size: 36px; font-weight: 300; color: #5d7080; margin-bottom: 18px; }
.new-obj { margin-left: auto; width: 248px; height: 60px; background: #69a3ea; border: 0; border-radius: 6px; color: #fff; font-size: 29.500px; display: flex; align-items: center; justify-content: center; gap: 17px; padding: 0 0 3px; }
.b-copy { margin-left: 53px; }
.b-edit { margin-left: 27px; }
.b-trash { margin-left: 30px; }
.b-sync { width: 60px; height: 60px; margin-left: 58px; background: #fff; box-shadow: 0 1px 4px rgba(0, 0, 0, .22); display: flex; align-items: center; justify-content: center; }
.b-up { margin-left: 54px; margin-right: 54px; margin-top: -6px; }
```
